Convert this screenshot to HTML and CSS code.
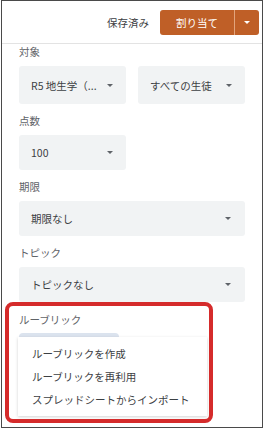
FILE: index.html
```html
<!DOCTYPE html>
<html lang="ja">
<head>
<meta charset="utf-8">
<link rel="stylesheet" href="styles.css">
</head>
<body>
<div class="frame">
  <header class="top">
    <span class="saved">保存済み</span>
    <div class="assign">
      <span class="assign-main">割り当て</span>
      <span class="assign-drop"><span class="tri tri-white"></span></span>
    </div>
  </header>

  <main class="content">
    <div class="label first">対象</div>
    <div class="row">
      <div class="select half tall"><span class="val">R5 地生学（...</span><span class="tri"></span></div>
      <div class="select half tall"><span class="val">すべての生徒</span><span class="tri"></span></div>
    </div>

    <div class="label">点数</div>
    <div class="select half"><span class="val">100</span><span class="tri"></span></div>

    <div class="label">期限</div>
    <div class="select full"><span class="val">期限なし</span><span class="tri"></span></div>

    <div class="label">トピック</div>
    <div class="select full"><span class="val">トピックなし</span><span class="tri"></span></div>

    <div class="label rubric-label">ルーブリック</div>
    <div class="rubric">
      <div class="rubric-btn"></div>
      <ul class="menu">
        <li>ルーブリックを作成</li>
        <li>ルーブリックを再利用</li>
        <li>スプレッドシートからインポート</li>
      </ul>
    </div>
  </main>

  <div class="highlight"></div>
</div>
</body>
</html>
```

FILE: styles.css
```css
* { box-sizing: border-box; }
html, body { margin: 0; padding: 0; background: #fff; }
body {
  font-family: "Noto Sans CJK JP", "Noto Sans", sans-serif;
  font-size: 10.5px;
  color: #3c4043;
}
.frame {
  position: relative;
  margin-left: 1px;
  width: 262px;
  height: 428px;
  border: 1px solid #4a4a4a;
  overflow: hidden;
}
.top {
  height: 43px;
  border-bottom: 1px solid #e3e3e3;
  display: flex;
  align-items: flex-start;
  justify-content: flex-end;
  padding: 9px 3px 0 0;
}
.saved {
  line-height: 25px;
  margin-right: 11px;
  color: #3c4043;
}
.assign {
  display: flex;
  height: 25px;
  background: #bf5f27;
  border-radius: 3px;
  color: #fff;
}
.assign-main {
  width: 75px;
  line-height: 25px;
  text-align: center;
  font-size: 10.5px;
  border-right: 1px solid #e2a47c;
}
.assign-drop {
  width: 24px;
  display: flex;
  align-items: center;
  justify-content: center;
}
.tri {
  width: 0;
  height: 0;
  border-left: 3.5px solid transparent;
  border-right: 3.5px solid transparent;
  border-top: 3.5px solid #5f6368;
}
.tri-white { border-top-color: #fff; }

.content {
  padding: 0 0 0 17px;
  display: flex;
  flex-direction: column;
}
.label {
  line-height: 16px;
  color: #5f6368;
  margin-top: 9px;
  margin-bottom: 6px;
}
.label.first { margin-top: 0; }
.row { display: flex; gap: 12px; }
.select {
  height: 35px;
  background: #f1f3f4;
  border-radius: 3px;
  display: flex;
  align-items: center;
  justify-content: space-between;
  padding: 0 13px 0 12px;
}
.select.tall { height: 38px; }
.select.half { width: 107px; }
.select.full { width: 226px; padding-right: 14px; }
.val { white-space: nowrap; }

.rubric-label { margin-top: 10px; margin-bottom: 5px; }
.rubric { position: relative; height: 90px; }
.rubric-btn {
  width: 100px;
  height: 30px;
  background: #dbe3ee;
  border-radius: 4px;
}
.menu {
  position: absolute;
  left: -1px;
  top: 4px;
  width: 189px;
  margin: 0;
  padding: 5px 0;
  list-style: none;
  background: #fff;
  box-shadow: 0 1px 3px rgba(0,0,0,0.18);
}
.menu li {
  line-height: 23px;
  padding-left: 14px;
  white-space: nowrap;
}
.highlight {
  position: absolute;
  left: 3px;
  top: 301px;
  width: 208px;
  height: 121px;
  border: 4px solid #d52b2b;
  border-radius: 8px;
}
```
